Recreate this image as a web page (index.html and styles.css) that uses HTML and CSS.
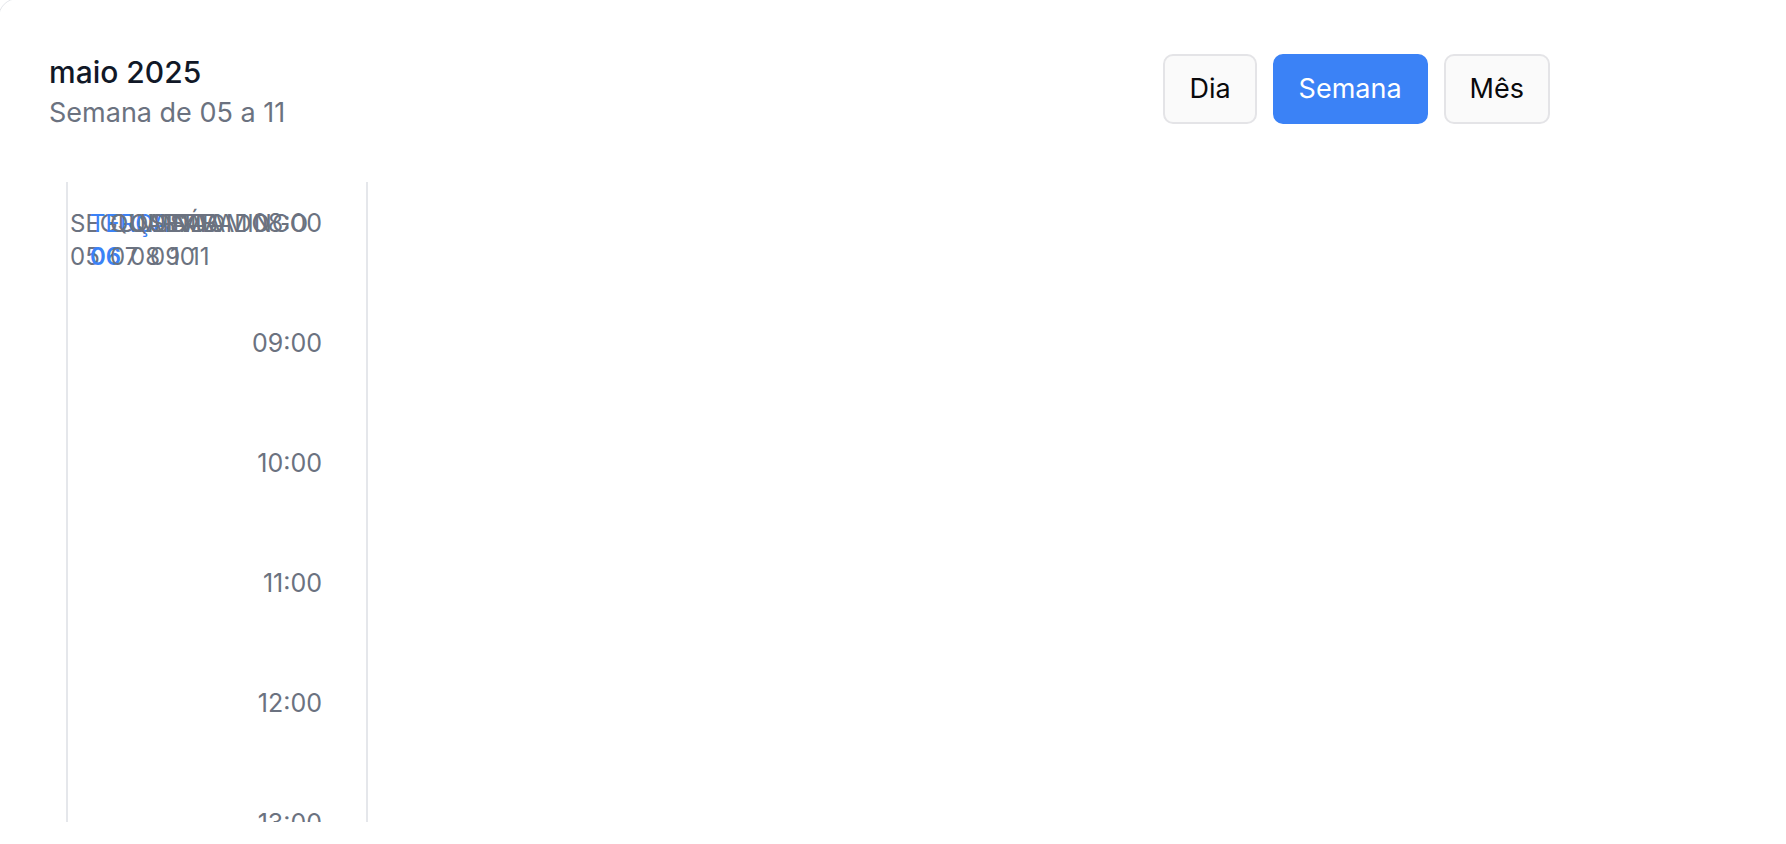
FILE: index.html
```html
<!DOCTYPE html>
<html lang="pt-BR">
<head>
<meta charset="utf-8">
<title>Calendário</title>
<link rel="stylesheet" href="styles.css">
</head>
<body>
<div class="card">
  <header class="head">
    <div class="titles">
      <h1 class="month">maio 2025</h1>
      <p class="range">Semana de 05 a 11</p>
    </div>
    <div class="views">
      <button class="view">Dia</button>
      <button class="view active">Semana</button>
      <button class="view">Mês</button>
    </div>
  </header>
  <div class="cal">
    <div class="slot first">
      <div class="days">
        <div class="day"><span>SEGUNDA</span><span>05</span></div>
        <div class="day today"><span>TERÇA</span><span class="num">06</span></div>
        <div class="day"><span>QUARTA</span><span>07</span></div>
        <div class="day"><span>QUINTA</span><span>08</span></div>
        <div class="day"><span>SEXTA</span><span>09</span></div>
        <div class="day"><span>SÁBADO</span><span>10</span></div>
        <div class="day"><span>DOMINGO</span><span>11</span></div>
      </div>
      <span class="hour">08:00</span>
    </div>
    <div class="slot"><span class="hour">09:00</span></div>
    <div class="slot"><span class="hour">10:00</span></div>
    <div class="slot"><span class="hour">11:00</span></div>
    <div class="slot"><span class="hour">12:00</span></div>
    <div class="slot"><span class="hour">13:00</span></div>
    <div class="slot"><span class="hour">14:00</span></div>
  </div>
</div>
</body>
</html>
```
FILE: styles.css
```css
html, body {
  margin: 0;
  padding: 0;
  overflow: hidden;
  background: #ffffff;
}

body {
  font-family: Inter, "Noto Sans", sans-serif;
  color: #111827;
}

.card {
  margin: -2px -60px 0 -2px;
  min-height: 900px;
  border: 1px solid #e5e7eb;
  border-radius: 20px;
  padding-left: 50px;
  background: #ffffff;
}

.head {
  display: flex;
  justify-content: space-between;
  align-items: flex-start;
  padding: 55px 295px 0 0;
}

.titles {
  display: flex;
  flex-direction: column;
}

.month {
  margin: 0;
  font-size: 30px;
  line-height: 36px;
  font-weight: 500;
  color: #111827;
}

.range {
  margin: 6px 0 0;
  font-size: 27px;
  line-height: 34px;
  color: #6b7280;
}

.views {
  display: flex;
  gap: 16px;
}

.view {
  font-family: inherit;
  font-size: 27px;
  line-height: 36px;
  padding: 15px 24px;
  border: 2px solid #e4e4e7;
  border-radius: 10px;
  background: #fafafa;
  color: #09090b;
}

.view.active {
  background: #3b82f6;
  border-color: #3b82f6;
  color: #ffffff;
}

.view.wide {
  padding: 15px 26px;
}

.cal {
  margin: 52px 0 0 17px;
  width: 302px;
  height: 640px;
  box-sizing: border-box;
  overflow: hidden;
  border-left: 2px solid #e5e7eb;
  border-right: 2px solid #e5e7eb;
}

.slot {
  height: 120px;
  box-sizing: border-box;
  display: flex;
  align-items: baseline;
  justify-content: flex-end;
  padding: 23px 44px 0 2px;
}

.slot.first {
  justify-content: space-between;
}

.days {
  display: grid;
  grid-template-columns: repeat(7, 20px);
  font-size: 24px;
  line-height: 33px;
  color: #6b7280;
  white-space: nowrap;
}

.day {
  display: flex;
  flex-direction: column;
}

.day.today {
  color: #3b82f6;
}

.day.today .num {
  font-weight: 600;
}

.hour {
  font-size: 25px;
  line-height: 36px;
  color: #6b7280;
}
```
